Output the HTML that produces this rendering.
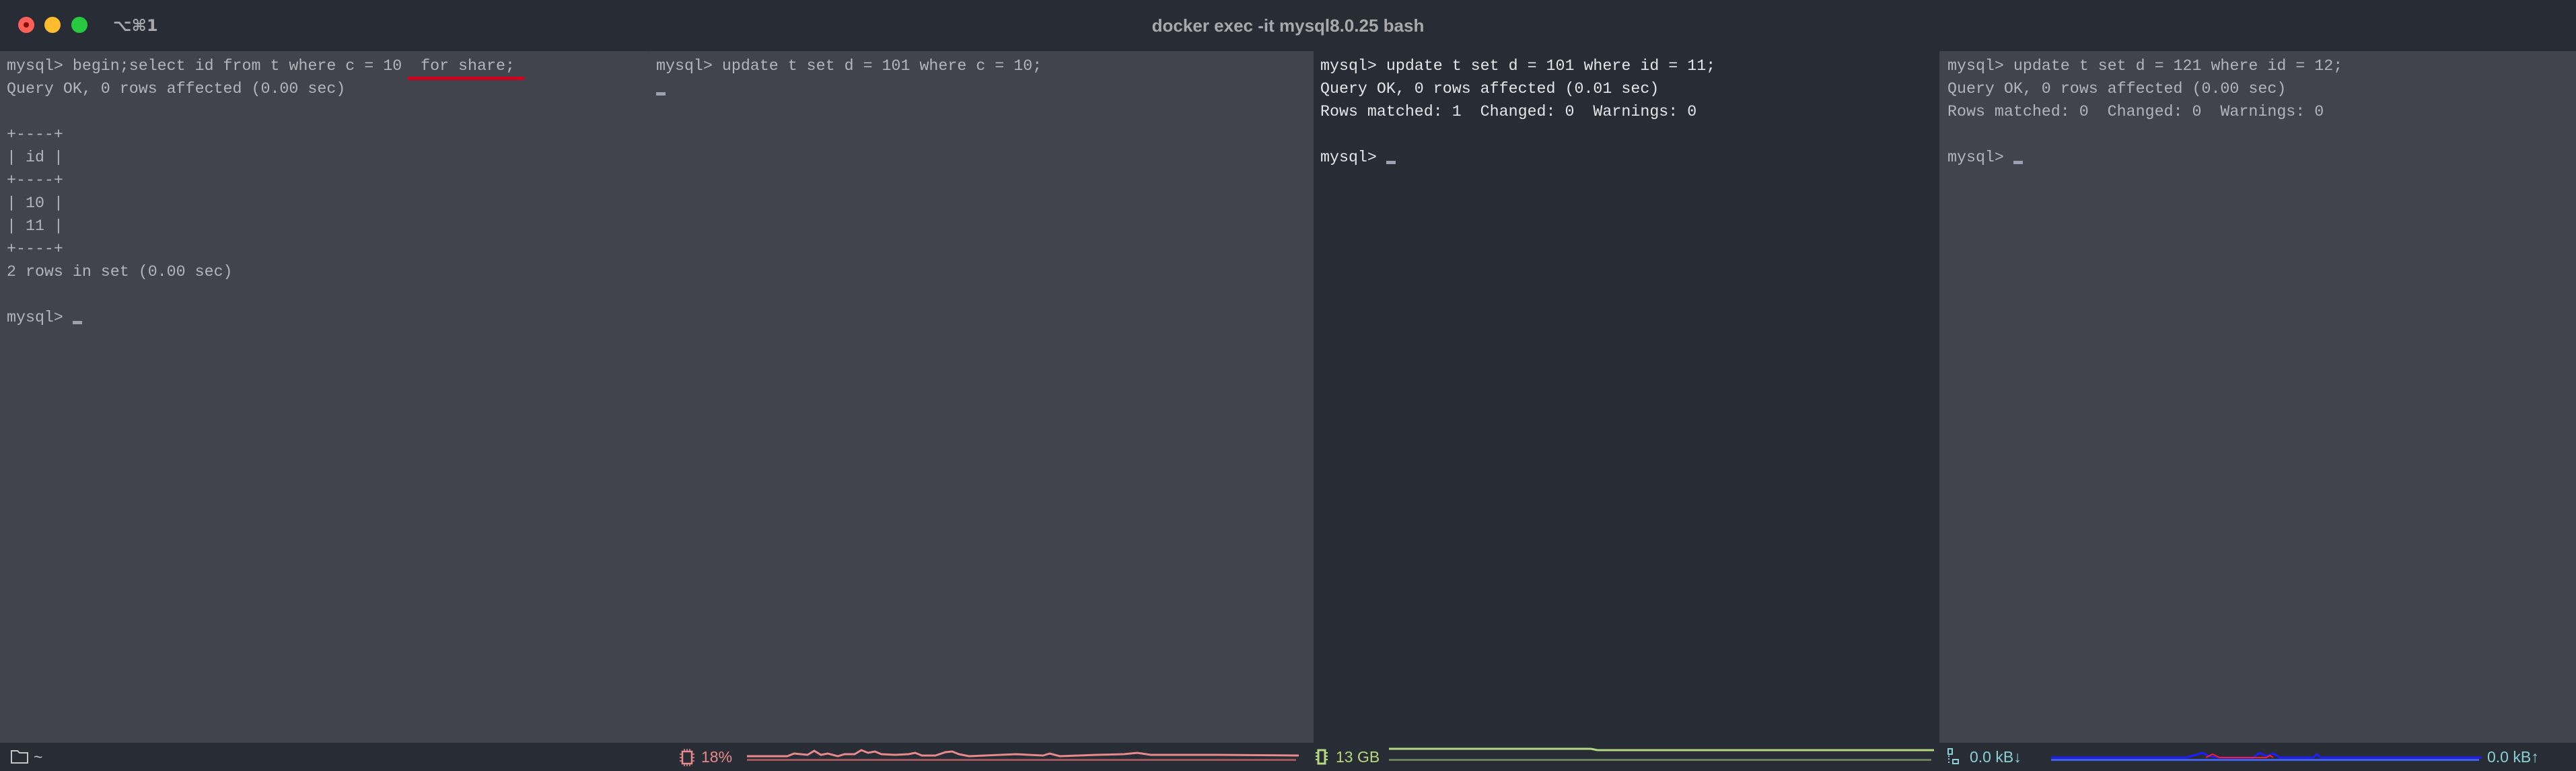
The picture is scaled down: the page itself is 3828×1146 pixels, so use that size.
<!DOCTYPE html>
<html><head><meta charset="utf-8"><style>
*{margin:0;padding:0;box-sizing:border-box}
html,body{width:3828px;height:1146px;overflow:hidden;background:#282c34}
.title{position:absolute;left:0;top:0;width:3828px;height:76px;background:#282c34;border-radius:20px 20px 0 0}
.dot{position:absolute;top:25px;width:24px;height:24px;border-radius:50%}
.pane{position:absolute;top:76px;height:1028px;font-family:"Liberation Mono",monospace;font-size:23.3px;line-height:34px;white-space:pre;padding-top:5px}
.g{background:#41444d;color:#b2b5ba}
.d{background:#282c34;color:#e4e6ea}
.cur{display:inline-block;width:14px;height:5px;background:#9ba1b0;vertical-align:-4px}
.status{position:absolute;top:1104px;left:0;width:3828px;height:42px;background:#282c34;font-family:"Liberation Sans",sans-serif;font-size:23px;line-height:42px;border-radius:0 0 20px 20px}
.st{position:absolute;top:0}
</style></head><body>
<div class="title">
<div class="dot" style="left:27px;background:#fe5f57"><div style="position:absolute;left:8px;top:8px;width:8px;height:8px;border-radius:50%;background:#8a0d08"></div></div>
<div class="dot" style="left:66px;background:#febc2e"></div>
<div class="dot" style="left:106px;background:#28c840"></div>
<div style="position:absolute;left:168px;top:0;line-height:76px;font-family:'DejaVu Sans',sans-serif;font-size:24px;color:#a6a8ad;font-weight:bold">⌥⌘1</div>
<div style="position:absolute;left:0;width:3828px;top:0;line-height:76px;text-align:center;font-family:'Liberation Sans',sans-serif;font-size:26px;font-weight:bold;color:#a8a9ad">docker exec -it mysql8.0.25 bash</div>
</div>
<div class="pane g" style="left:0;width:963px;padding-left:10px">mysql&gt; begin;select id from t where c = 10  for share;
Query OK, 0 rows affected (0.00 sec)

+----+
| id |
+----+
| 10 |
| 11 |
+----+
2 rows in set (0.00 sec)

mysql&gt; <span class="cur"></span></div>
<div style="position:absolute;left:606px;top:114px;width:173px;height:5px;background:#d0021b"></div>
<div class="pane g" style="left:963px;width:989px;padding-left:11px;border-left:1px solid #3e4148">mysql&gt; update t set d = 101 where c = 10;
<span class="cur"></span></div>
<div class="pane d" style="left:1952px;width:930px;padding-left:10px">mysql&gt; update t set d = 101 where id = 11;
Query OK, 0 rows affected (0.01 sec)
Rows matched: 1  Changed: 0  Warnings: 0

mysql&gt; <span class="cur"></span></div>
<div class="pane g" style="left:2882px;width:946px;padding-left:12px">mysql&gt; update t set d = 121 where id = 12;
Query OK, 0 rows affected (0.00 sec)
Rows matched: 0  Changed: 0  Warnings: 0

mysql&gt; <span class="cur"></span></div>
<div class="status">
<svg class="st" style="left:14px;top:9px" width="30" height="24"><path d="M3 3h9l3 3h12v15H3z" fill="none" stroke="#c4c4c4" stroke-width="2"/></svg>
<div class="st" style="left:50px;color:#c4c4c4">~</div>
<svg class="st" style="left:1008px;top:9px" width="26" height="26"><rect x="6" y="4" width="14" height="18" fill="none" stroke="#e8898b" stroke-width="2.5"/><path d="M2 8h4M2 13h4M2 18h4M20 8h4M20 13h4M20 18h4M9 0v4M13 0v4M17 0v4M9 22v4M13 22v4M17 22v4" stroke="#e8898b" stroke-width="1.5"/></svg>
<div class="st" style="left:1042px;color:#e8898b">18%</div>
<svg class="st" style="left:1110px;top:0" width="820" height="42"><polyline points="0,20 60,20 70,16 90,18 100,12 110,18 120,16 135,20 145,17 160,17 170,11 180,15 190,13 200,17 220,18 240,17 250,15 260,19 280,19 295,14 305,13 315,17 330,20 400,17 440,19 450,16 465,20 520,18 560,17 580,15 600,18 700,18 820,19" fill="none" stroke="#e8898b" stroke-width="3"/><rect x="0" y="24" width="816" height="3" fill="#a0565a"/></svg>
<svg class="st" style="left:1953px;top:9px" width="24" height="24"><rect x="6" y="2" width="10" height="20" fill="none" stroke="#b6d77f" stroke-width="3"/><path d="M2 6h4M2 11h4M2 16h4M16 6h4M16 11h4M16 16h4" stroke="#b6d77f" stroke-width="2"/></svg>
<div class="st" style="left:1985px;color:#b6d77f">13 GB</div>
<svg class="st" style="left:2064px;top:0" width="810" height="42"><polyline points="0,9 300,9 310,11 810,11" fill="none" stroke="#b6d77f" stroke-width="3"/><rect x="0" y="24" width="806" height="3" fill="#6d8058"/></svg>
<svg class="st" style="left:2892px;top:7px" width="22" height="28"><path d="M3 2h6v8H3zM3 13h2M3 17h2M3 22h2M10 18h8v6h-8z" fill="none" stroke="#8ad0d4" stroke-width="2"/></svg>
<div class="st" style="left:2927px;color:#8ad0d4">0.0 kB↓</div>
<svg class="st" style="left:3048px;top:0" width="640" height="42"><polyline points="0,22 200,22 215,18 225,15 235,20 250,22 300,22 310,15 320,20 330,16 340,22 390,22 395,17 400,22 640,22" fill="none" stroke="#1d1dff" stroke-width="3"/><polyline points="230,22 240,17 250,22 320,22 325,19 330,22" fill="none" stroke="#ff2020" stroke-width="2"/><rect x="0" y="24" width="636" height="3" fill="#4060e8"/></svg>
<div class="st" style="left:3696px;color:#8ad0d4">0.0 kB↑</div>
</div>
</body></html>
